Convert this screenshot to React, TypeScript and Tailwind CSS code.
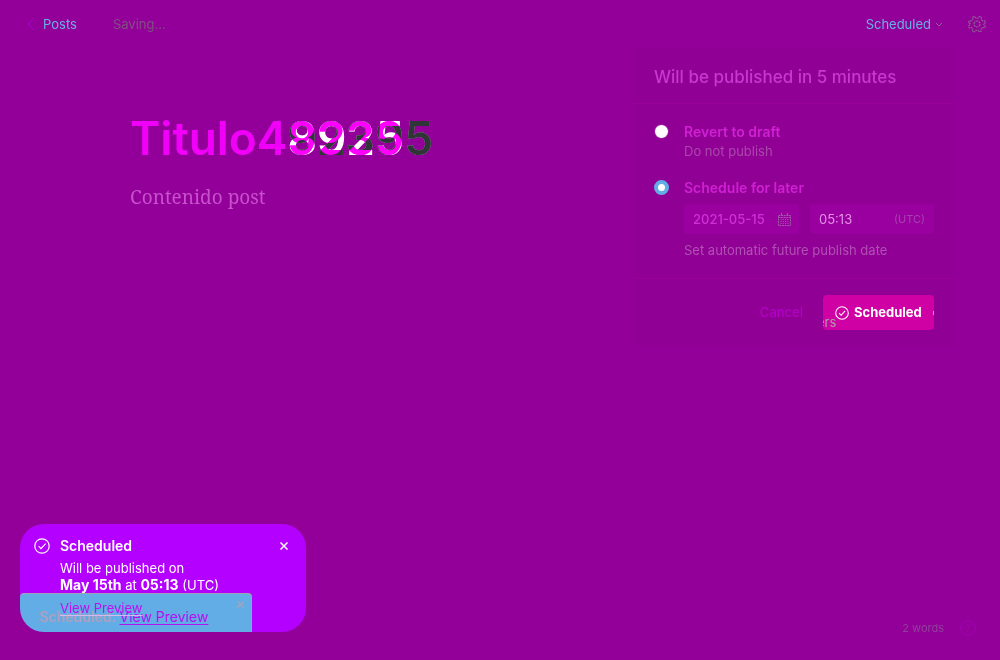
import { ReactNode, useState } from "react";

function Gear() {
  return (
    <svg viewBox="0 0 24 24" className="size-[18px]" fill="none" stroke="currentColor" strokeWidth="1.5" strokeDasharray="3.2 0.9">
      <path d="M8.500 1.500l2 2.600h3l2-2.600 3 1.200-.4 3.300 2 2 3.300-.4 1.200 3-2.700 1.900v1l2.700 2-1.200 2.900-3.300-.4-2 2 .4 3.300-3 1.200-2-2.600h-3l-2 2.600-3-1.200.4-3.300-2-2-3.300.4-1.200-2.900 2.700-2v-1L-.6 10.600l1.200-3 3.300.4 2-2-.4-3.300z" transform="translate(1.200 .6) scale(.9)" />
      <circle cx="12" cy="12" r="4" />
    </svg>
  );
}

function CheckCircle({ className }: { className: string }) {
  return (
    <svg viewBox="0 0 16 16" className={className} fill="none" stroke="currentColor" strokeWidth="1.2">
      <circle cx="8" cy="8" r="7.200" />
      <path d="M4.600 8.200l2.400 2.400 4.600-5" />
    </svg>
  );
}

function Calendar() {
  return (
    <svg viewBox="0 0 13 13" className="size-[13px]" fill="none" stroke="#a35aa6">
      <path d="M.5 2.500h12v10H.5zM3.500 0v2.500M9.500 0v2.500M.5 4.500h12" strokeDasharray="2 .6" />
      <path d="M2.500 6.500h8M2.500 8.500h8M2.500 10.500h8" strokeDasharray="1 1.300" />
    </svg>
  );
}

function Cross({ className }: { className: string }) {
  return (
    <svg viewBox="0 0 8 8" className={className} fill="none" stroke="currentColor" strokeWidth="1.5">
      <path d="M.5 .5l7 7M7.500 .5l-7 7" />
    </svg>
  );
}

function Title() {
  return (
    <h1 className="text-[46px] font-semibold leading-[54px] text-[#f000f8]">
      Titulo4
      <span
        data-previous="92395"
        className="relative inline-block text-white before:absolute before:left-0 before:top-0 before:text-[#00ff00] before:mix-blend-difference before:content-[attr(data-previous)] after:absolute after:left-0 after:top-0 after:text-[#85ff83] after:mix-blend-color-burn after:content-[attr(data-previous)]"
      >
        8925
        <span className="absolute left-0 top-0 text-[#ff35ff] mix-blend-multiply">92395</span>
      </span>
    </h1>
  );
}

function Choice({ id, label, checked, onChange, children }: { id: string; label: string; checked: boolean; onChange: () => void; children: ReactNode }) {
  return (
    <div className="flex gap-[15px]">
      <input
        id={id}
        type="radio"
        name="publish"
        checked={checked}
        onChange={onChange}
        className="size-[15px] shrink-0 appearance-none rounded-full border border-[#930099] bg-white checked:border-4 checked:border-[#62ade6]"
      />
      <div className="min-w-0 flex-1 text-[13px] leading-5">
        <label htmlFor={id} className="block text-sm leading-4 font-semibold text-[#cf20d4]">{label}</label>
        {children}
      </div>
    </div>
  );
}

function PublishMenu() {
  const [mode, setMode] = useState("schedule");
  return (
    <section className="w-[320px] rounded bg-[#910094]">
      <h2 className="border-b border-[#99009c] px-5 pt-[13px] pb-2.5 text-[17px] leading-8 font-medium text-[#c838d0]">Will be published in 5 minutes</h2>
      <div className="flex flex-col gap-5 border-b border-[#99009c] px-5 pt-5 pb-[18px]">
        <Choice id="draft" label="Revert to draft" checked={mode === "draft"} onChange={() => setMode("draft")}>
          <p className="-mb-px pt-px text-[#aa48ac]">Do not publish</p>
        </Choice>
        <Choice id="later" label="Schedule for later" checked={mode === "schedule"} onChange={() => setMode("schedule")}>
          <div className="mt-2 flex gap-[11px]">
            <div className="flex h-[30px] w-[115px] items-center rounded bg-[#99009f] pl-[9px] pr-2">
              <input aria-label="Publish date" defaultValue="2021-05-15" className="w-0 min-w-0 flex-1 bg-transparent font-medium text-[#cf30d8] outline-none" />
              <Calendar />
            </div>
            <div className="flex h-[30px] flex-1 items-center rounded bg-[#99009f] px-[9px]">
              <input aria-label="Publish time" defaultValue="05:13" className="w-0 min-w-0 flex-1 bg-transparent text-[#e690e8] outline-none" />
              <span className="text-[11px] text-[#a840b0]">(UTC)</span>
            </div>
          </div>
          <p className="mt-1.5 text-[#b050b4]">Set automatic future publish date</p>
        </Choice>
      </div>
      <div className="flex items-center justify-end gap-5 px-5 py-4">
        <button className="text-[13px] font-medium text-[#b400c8]">Cancel</button>
        <button className="relative flex h-[35px] w-[111px] items-center gap-[5px] overflow-hidden rounded bg-[#cf00a4] pl-3 text-[13px] font-bold text-white">
          <CheckCircle className="size-3.5" />
          Scheduled
          <span className="absolute bottom-0 -left-1.5 text-[13px] leading-4 font-normal text-[#aaa0aa]">ers</span>
          <span className="absolute right-0 top-4 h-1 w-px bg-[#c0a0c0]" />
        </button>
      </div>
    </section>
  );
}

function Toast() {
  return (
    <aside className="relative h-[108px] w-[286px] overflow-hidden rounded-3xl bg-[#b400ff] text-white">
      <div className="absolute bottom-0 left-0 h-[39px] w-[232px] rounded-t-sm border-t border-r border-[#9f9fb5] bg-[#62ade6]">
        <p className="pl-[19px] pt-[13px] text-sm leading-5 whitespace-nowrap">
          <strong className="font-semibold text-[#aaa0c0]">Scheduled.</strong>{" "}
          <a href="#preview" className="text-[#b410f0] underline underline-offset-2">View Preview</a>
        </p>
        <button aria-label="Dismiss" className="absolute right-[7px] top-[7px] flex text-[#a9a4b4]"><Cross className="size-[7px]" /></button>
      </div>
      <div className="relative flex items-start px-[14px] pt-[14px]">
        <CheckCircle className="size-4 shrink-0" />
        <div className="flex-1 pl-2.5 text-[13px] leading-[17px]">
          <h3 className="text-sm leading-4 font-semibold">Scheduled</h3>
          <p className="mt-1.5">
            Will be published on<br />
            <strong className="text-sm leading-4">May 15th</strong> at <strong className="text-sm leading-4">05:13</strong> (UTC)
          </p>
          <a href="#preview" className="mt-1.5 inline-block text-[#c010f0] underline decoration-[#d8b8f0] underline-offset-2">View Preview</a>
        </div>
        <button aria-label="Close" className="mr-1 mt-1"><Cross className="size-2" /></button>
      </div>
    </aside>
  );
}

export default function App() {
  return (
    <div className="flex min-h-screen flex-col bg-[#930099] font-['Inter',sans-serif]">
      <header className="flex h-12 items-center pl-[27px] pr-[14px] text-[13px] leading-4">
        <a href="#posts" className="flex items-center gap-2 text-[#68b0e4]">
          <svg viewBox="0 0 8 12" className="h-3 w-2" fill="none" stroke="#b000dc"><path d="M7 .5L1 6l6 5.500" /></svg>
          Posts
        </a>
        <span className="ml-9 flex-1 text-[#805080]">Saving...</span>
        <button className="flex items-center gap-1 text-[#68b0e4]">
          Scheduled
          <svg viewBox="0 0 8 5" className="h-[5px] w-2" fill="none" stroke="#91609b"><path d="M1 1l3 3 3-3" /></svg>
        </button>
        <button aria-label="Settings" className="ml-[25px] text-[#8c6490]"><Gear /></button>
      </header>
      <main className="flex flex-1 items-start justify-between pl-[130px] pr-[46px]">
        <article className="pt-[63px]">
          <Title />
          <p className="mt-[18px] font-['Noto_Serif','Liberation_Serif',serif] text-[19px] leading-7 text-[#c850cc]">Contenido post</p>
        </article>
        <PublishMenu />
      </main>
      <footer className="flex items-end justify-between pb-7 pl-5 pr-6">
        <Toast />
        <div className="-mb-1 flex items-center gap-4 text-[11px] leading-4 text-[#90409a]">
          <span>2 words</span>
          <button aria-label="Help" className="size-4 rounded-full border border-[#a400b4] text-[11px] leading-[14px] text-[#a400b4]">?</button>
        </div>
      </footer>
    </div>
  );
}
